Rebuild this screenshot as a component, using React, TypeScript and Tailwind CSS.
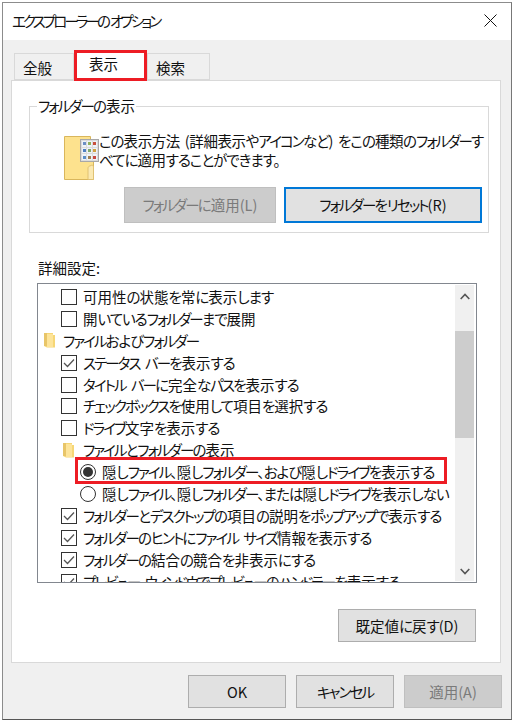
const font = "font-['Noto_Sans_CJK_JP','Noto_Sans',sans-serif] [font-feature-settings:'palt'] [word-spacing:2px]";

// The reference font has much narrower kana than Noto, so kana runs get tighter tracking
function Jp({ text, tight }: { text: string; tight?: boolean }) {
  const parts = text.split(/([\u30A0-\u30FF]+|[\u3040-\u309F、。]+)/).filter(Boolean);
  return (
    <>
      {parts.map((p, i) => {
        if (/^[\u30A0-\u30FF]/.test(p))
          return <span key={i} className={tight ? "tracking-[-2.9px]" : "tracking-[-1.9px]"}>{p}</span>;
        if (/^[\u3040-\u309F、。]/.test(p)) return <span key={i} className="tracking-[-1px]">{p}</span>;
        return <span key={i}>{p}</span>;
      })}
    </>
  );
}

type RowData = {
  kind: "check" | "radio" | "folder";
  level: number;
  on?: boolean;
  text: string;
};

const rows: RowData[] = [
  { kind: "check", level: 1, text: "可用性の状態を常に表示します" },
  { kind: "check", level: 1, text: "開いているフォルダーまで展開" },
  { kind: "folder", level: 0, text: "ファイルおよびフォルダー" },
  { kind: "check", level: 1, on: true, text: "ステータス バーを表示する" },
  { kind: "check", level: 1, text: "タイトル バーに完全なパスを表示する" },
  { kind: "check", level: 1, text: "チェックボックスを使用して項目を選択する" },
  { kind: "check", level: 1, text: "ドライブ文字を表示する" },
  { kind: "folder", level: 1, text: "ファイルとフォルダーの表示" },
  { kind: "radio", level: 2, on: true, text: "隠しファイル、隠しフォルダー、および隠しドライブを表示する" },
  { kind: "radio", level: 2, text: "隠しファイル、隠しフォルダー、または隠しドライブを表示しない" },
  { kind: "check", level: 1, on: true, text: "フォルダーとデスクトップの項目の説明をポップアップで表示する" },
  { kind: "check", level: 1, on: true, text: "フォルダーのヒントにファイル サイズ情報を表示する" },
  { kind: "check", level: 1, on: true, text: "フォルダーの結合の競合を非表示にする" },
  { kind: "check", level: 1, on: true, text: "プレビュー ウィンドウでプレビューのハンドラーを表示する" },
];

function SmallFolder() {
  return (
    <svg width="11" height="15" viewBox="0 0 11 15" className="shrink-0">
      <path d="M0 0h9v2l2 0v12.500H3L0 13z" fill="#f6d675" />
      <path d="M0 0h3v13H0z" fill="#e8c568" />
      <path d="M3 1h6v13H3z" fill="#fde49a" />
    </svg>
  );
}

function FolderIcon() {
  const colors = ["#6b8fc4", "#8fb05a", "#c8503c", "#4f7fc0", "#7fa86a", "#d0a040", "#5c8ec8", "#a08050", "#c84840"];
  return (
    <div className="relative w-[35px] h-[44px] shrink-0">
      <svg width="30" height="44" viewBox="0 0 30 44">
        <path d="M.5.5h26v4h3v39H.5z" fill="#fde28e" stroke="#d9b65c" />
        <path d="M26 30c3-2 3.500 0 3.500 2v11.500H24V32c0-1 1-2 2-2z" fill="#fbe9b2" stroke="#e0c273" />
      </svg>
      <div className="absolute left-[16px] top-[3px] w-[19px] h-[23px] bg-[#dcdcdc] border border-[#a8a8a8] grid grid-cols-3 gap-[1px] p-[1px]">
        {colors.map((c, i) => (
          <div key={i} className="bg-[#eef3f8] flex items-center justify-center">
            <div className="w-[3px] h-[3px]" style={{ backgroundColor: c }} />
          </div>
        ))}
      </div>
    </div>
  );
}

function Check({ on }: { on?: boolean }) {
  return (
    <div className="w-[16px] h-[16px] shrink-0 border border-[#333333] bg-white flex items-center justify-center">
      {on ? (
        <svg width="12" height="10" viewBox="0 0 12 10">
          <path d="M1 5l3.500 3.500L11 1.500" fill="none" stroke="#555555" strokeWidth="1.300" />
        </svg>
      ) : null}
    </div>
  );
}

function Radio({ on }: { on?: boolean }) {
  return (
    <div className="w-[16px] h-[16px] shrink-0 rounded-full border border-[#333333] bg-white flex items-center justify-center">
      {on ? <div className="w-[10px] h-[10px] rounded-full bg-[#333333]" /> : null}
    </div>
  );
}

function Row({ row }: { row: RowData }) {
  let pad = "pl-[23px] gap-[6px]";
  if (row.kind === "folder") pad = row.level === 0 ? "pl-[6px] gap-[8px]" : "pl-[25px] gap-[9px]";
  if (row.kind === "radio") pad = "pl-[42px] gap-[6px]";
  return (
    <div className={`h-[21.92px] flex items-center whitespace-nowrap shrink-0 ${pad}`}>
      {row.kind === "check" ? <Check on={row.on} /> : null}
      {row.kind === "radio" ? <Radio on={row.on} /> : null}
      {row.kind === "folder" ? <SmallFolder /> : null}
      <span>
        <Jp text={row.text} />
      </span>
    </div>
  );
}

function Btn({ label, size, disabled, focus }: { label: string; size: string; disabled?: boolean; focus?: boolean }) {
  const look = disabled
    ? "bg-[#cccccc] border border-[#bfbfbf] text-[#7a7a7a]"
    : focus
      ? "bg-[#e1e1e1] border-2 border-[#0078d7] text-[#111111]"
      : "bg-[#e1e1e1] border border-[#adadad] text-[#111111]";
  return (
    <div className={`${size} flex items-center justify-center shrink-0 whitespace-nowrap ${look}`}>
      <span>
        <Jp text={label} />
      </span>
    </div>
  );
}

function Tab({ label, width, active }: { label: string; width: string; active?: boolean }) {
  return (
    <div
      className={
        active
          ? `${width} h-[31px] -mb-[1px] z-10 bg-white border border-b-0 border-[#d9d9d9] pl-[14px] pt-[3px] shrink-0 relative`
          : `${width} h-[27px] bg-[#f0f0f0] border border-[#d9d9d9] pl-[8px] pt-[4px] shrink-0`
      }
    >
      {label}
      {active ? <div className="absolute -left-[1px] -top-[1px] w-[73px] h-[31px] border-[3px] border-[#ed1c24]" /> : null}
    </div>
  );
}

export default function App() {
  return (
    <div className={`w-[514px] h-[722px] bg-white pl-[2px] pt-[2px] text-[14.5px] leading-[20px] text-[#111111] ${font}`}>
      <div className="w-[510px] h-[718px] border border-[#8c8c8c] border-b-[#555555] border-r-[#777777] bg-[#f0f0f0] flex flex-col">
        <div className="h-[37px] bg-white flex items-center justify-between pl-[9px] pr-[14px] pb-[2px] shrink-0">
          <span>
            <Jp text="エクスプローラーのオプション" tight />
          </span>
          <svg width="13" height="13" viewBox="0 0 13 13">
            <path d="M.5.5l12 12M12.500.5l-12 12" stroke="#111111" strokeWidth="1" />
          </svg>
        </div>

        <div className="flex items-end ml-[11px] h-[40px] shrink-0 relative z-10">
          <Tab label="全般" width="w-[60px]" />
          <Tab label="表示" width="w-[73px]" active />
          <Tab label="検索" width="w-[63px]" />
        </div>

        <div className="w-[490px] h-[583px] ml-[8px] bg-white border border-[#d9d9d9] shrink-0 flex flex-col pl-[17px]">
          <div className="relative w-[460px] h-[127px] mt-[25px] border border-[#d9d9d9] shrink-0 flex flex-col">
            <div className="absolute left-[7px] -top-[11px] bg-white px-[1px]">
              <Jp text="フォルダーの表示" />
            </div>
            <div className="flex pl-[34px] pt-[29px] h-[80px] shrink-0">
              <FolderIcon />
              <div className="-mt-[5px] whitespace-nowrap flex flex-col tracking-[-0.4px]">
                <div className="h-[19px] flex items-center">
                  <span>
                    <Jp text="この表示方法 (詳細表示やアイコンなど) をこの種類のフォルダーす" />
                  </span>
                </div>
                <div className="h-[19px] flex items-center">
                  <span>
                    <Jp text="べてに適用することができます。" />
                  </span>
                </div>
              </div>
            </div>
            <div className="flex gap-[8px] pl-[94px]">
              <Btn label="フォルダーに適用(L)" size="w-[152px] h-[36px]" disabled />
              <Btn label="フォルダーをリセット(R)" size="w-[198px] h-[36px]" focus />
            </div>
          </div>

          <div className="mt-[25px] pl-[1px] ml-[8px] shrink-0">
            <Jp text="詳細設定:" />
          </div>
          <div className="w-[440px] h-[300px] mt-[5px] ml-[8px] border border-[#82878f] bg-white flex overflow-hidden shrink-0">
            <div className="w-[417px] pt-[2px] flex flex-col overflow-hidden shrink-0">
              {rows.map((r) => (
                <Row key={r.text} row={r} />
              ))}
            </div>
            <div className="w-[19px] mt-[1px] mb-[1px] bg-[#f0f0f0] flex flex-col items-center shrink-0">
              <div className="h-[22px] flex items-center justify-center shrink-0">
                <svg width="10" height="7" viewBox="0 0 10 7">
                  <path d="M.7 6L5 1.500 9.300 6" fill="none" stroke="#555555" strokeWidth="1.600" />
                </svg>
              </div>
              <div className="w-full h-[107px] mt-[24px] bg-[#cdcdcd] shrink-0" />
              <div className="mt-auto h-[20px] flex items-center justify-center shrink-0">
                <svg width="10" height="7" viewBox="0 0 10 7">
                  <path d="M.7 1L5 5.500 9.300 1" fill="none" stroke="#555555" strokeWidth="1.600" />
                </svg>
              </div>
            </div>
          </div>

          <div className="mt-[26px] ml-[309px]">
            <Btn label="既定値に戻す(D)" size="w-[138px] h-[33px]" />
          </div>
        </div>

        <div className="flex gap-[10px] ml-[185px] mt-[12px]">
          <Btn label="OK" size="w-[98px] h-[33px]" />
          <Btn label="キャンセル" size="w-[98px] h-[33px]" />
          <Btn label="適用(A)" size="w-[98px] h-[33px]" disabled />
        </div>
      </div>

      <div className="absolute left-[75px] top-[457px] w-[372px] h-[27px] border-[3px] border-[#ed1c24]" />
    </div>
  );
}
